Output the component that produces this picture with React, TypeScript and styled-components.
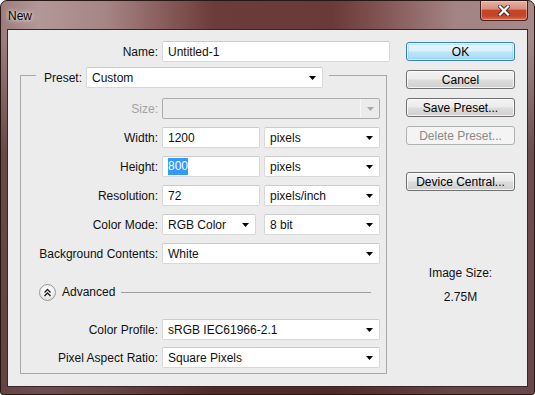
import React from 'react';
import styled, { createGlobalStyle } from 'styled-components';

const GlobalStyle = createGlobalStyle`
  html, body {
    margin: 0;
    padding: 0;
    background: #ffffff;
  }
  body {
    font-family: "Liberation Sans", Arial, sans-serif;
    font-size: 12px;
    color: #101010;
  }
`;

const Window = styled.div`
  box-sizing: border-box;
  width: 535px;
  height: 395px;
  border: 1px solid #2b1616;
  border-radius: 7px 7px 3px 3px;
  background:
    linear-gradient(180deg, rgba(70, 30, 30, 0) 0px, rgba(70, 30, 30, 0) 36px, rgba(62, 28, 28, 0.55) 150px, rgba(62, 28, 28, 0.6) 100%),
    linear-gradient(90deg, #9c7c7c 0%, #b39898 7%, #a58484 20%, #8a5e5e 30%, #6c3b3b 40%, #6a3a3a 62%, #7f5050 70%, #a38383 85%, #a68a8a 100%);
  display: flex;
  flex-direction: column;
  overflow: hidden;
`;

const TitleBar = styled.div`
  height: 28px;
  display: flex;
  align-items: flex-start;
  justify-content: space-between;
`;

const Title = styled.div`
  padding: 8px 0 0 7px;
  font-size: 12px;
  line-height: 14px;
  color: #000;
  text-shadow: 0 0 6px rgba(255, 255, 255, 0.9), 0 0 3px rgba(255, 255, 255, 0.8);
`;

const CloseButton = styled.div`
  box-sizing: border-box;
  width: 48px;
  height: 20px;
  margin-right: 6px;
  border: 1px solid #4a1e1e;
  border-top: none;
  border-radius: 0 0 4px 4px;
  background: linear-gradient(180deg, #e6b2a4 0%, #d98f7c 42%, #c4452a 50%, #c24528 78%, #dc6d4c 100%);
  box-shadow: inset 0 0 0 1px rgba(255, 210, 200, 0.45);
  display: flex;
  align-items: center;
  justify-content: center;
`;

const Client = styled.div`
  flex: 1;
  margin: 0 6px 7px 6px;
  border: 1px solid #3a2424;
  background: #ececec;
  display: flex;
  padding-top: 11px;
`;

const LeftPane = styled.div`
  width: 382px;
  display: flex;
  flex-direction: column;
`;

const RightPane = styled.div`
  width: 109px;
  margin-left: 16px;
  padding-top: 1px;
  display: flex;
  flex-direction: column;
  gap: 9px;
`;

const Row = styled.div<{ $top?: number }>`
  display: flex;
  align-items: center;
  gap: 4px;
  height: 21px;
  margin-top: ${(p) => p.$top ?? 0}px;
`;

const Label = styled.div<{ $width: number; $disabled?: boolean }>`
  width: ${(p) => p.$width}px;
  text-align: right;
  white-space: nowrap;
  color: ${(p) => (p.$disabled ? '#a3a3a3' : '#101010')};
`;

const Field = styled.div<{ $width: number; $offset?: number }>`
  box-sizing: border-box;
  width: ${(p) => p.$width}px;
  height: 21px;
  margin-left: ${(p) => p.$offset ?? 0}px;
  padding-left: 5px;
  border: 1px solid #d8d8d8;
  border-top-color: #cbcbcb;
  border-radius: 2px;
  background: #ffffff;
  display: flex;
  align-items: center;
  white-space: nowrap;
`;

const Selected = styled.span`
  background: #3399ff;
  color: #ffffff;
  padding: 1px 0 2px;
`;

const Select = styled(Field)<{ $disabled?: boolean }>`
  justify-content: space-between;
  padding-right: 6px;
  ${(p) =>
    p.$disabled &&
    `
    background: #ebebeb;
    border-color: #adadad;
    padding-right: 0;
  `}
`;

const ArrowBox = styled.div<{ $disabled?: boolean }>`
  display: flex;
  align-items: center;
  height: 100%;
  ${(p) =>
    p.$disabled &&
    `
    width: 18px;
    justify-content: center;
    border-left: 1px solid #f6f6f6;
  `}
`;

const Group = styled.div`
  margin: 5px 0 0 12px;
  width: 367px;
  display: flex;
  flex-direction: column;
`;

const GroupHead = styled.div`
  display: flex;
  align-items: flex-start;
  height: 21px;
`;

const CornerLeft = styled.div`
  box-sizing: border-box;
  width: 16px;
  height: 13px;
  margin-top: 8px;
  border-top: 1px solid #a8a8a8;
  border-left: 1px solid #a8a8a8;
`;

const CornerRight = styled.div`
  box-sizing: border-box;
  flex: 1;
  height: 13px;
  margin: 8px 0 0 6px;
  border-top: 1px solid #a8a8a8;
  border-right: 1px solid #a8a8a8;
`;

const HeadLabel = styled.div`
  width: 46px;
  margin-right: 4px;
  height: 21px;
  display: flex;
  align-items: center;
  justify-content: flex-end;
`;

const GroupBody = styled.div`
  border: 1px solid #a8a8a8;
  border-top: none;
  padding: 10px 0 5px 0;
  display: flex;
  flex-direction: column;
`;

const AdvancedRow = styled.div`
  display: flex;
  align-items: center;
  height: 18px;
  margin-top: 19px;
  padding: 0 15px 0 18px;
`;

const RoundButton = styled.div`
  box-sizing: border-box;
  width: 17px;
  height: 17px;
  border-radius: 50%;
  border: 1px solid #9a9a9a;
  background: radial-gradient(circle at 50% 30%, #ffffff 0%, #f2f2f2 45%, #d6d6d6 100%);
  display: flex;
  align-items: center;
  justify-content: center;
`;

const AdvancedText = styled.div`
  margin-left: 6px;
`;

const Rule = styled.div`
  flex: 1;
  height: 1px;
  margin-left: 6px;
  background: #9c9c9c;
`;

const Button = styled.div<{ $variant?: 'default' | 'disabled'; $top?: number }>`
  box-sizing: border-box;
  height: 19px;
  margin-top: ${(p) => p.$top ?? 0}px;
  border: 1px solid #707070;
  border-radius: 3px;
  background: linear-gradient(180deg, #f3f3f3 0%, #ebebeb 48%, #dddddd 52%, #cfcfcf 100%);
  box-shadow: inset 0 0 0 1px rgba(255, 255, 255, 0.75);
  display: flex;
  align-items: center;
  justify-content: center;
  color: #000;
  white-space: nowrap;
  ${(p) =>
    p.$variant === 'default' &&
    `
    border-color: #3c7fb1;
    background: linear-gradient(180deg, #eaf6fd 0%, #d9f0fc 48%, #bee6fd 52%, #a7d9f5 100%);
    box-shadow: inset 0 0 0 1px rgba(255, 255, 255, 0.6), inset 0 0 0 2px rgba(110, 200, 240, 0.35);
  `}
  ${(p) =>
    p.$variant === 'disabled' &&
    `
    border-color: #adb2b5;
    background: #f4f4f4;
    box-shadow: none;
    color: #8a8a8a;
  `}
`;

const ImageInfo = styled.div`
  margin-top: 66px;
  text-align: center;
  line-height: 14px;
  display: flex;
  flex-direction: column;
  gap: 10px;
`;

const Arrow = ({ color = '#000' }: { color?: string }) => (
  <svg width="7" height="4" viewBox="0 0 7 4">
    <polygon points="0,0 7,0 3.5,4" fill={color} />
  </svg>
);

const Dropdown = ({
  width,
  value,
  disabled,
  offset,
}: {
  width: number;
  value?: string;
  disabled?: boolean;
  offset?: number;
}) => (
  <Select $width={width} $disabled={disabled} $offset={offset}>
    <span>{value}</span>
    <ArrowBox $disabled={disabled}>
      <Arrow color={disabled ? '#a8a8a8' : '#000'} />
    </ArrowBox>
  </Select>
);

const CloseGlyph = () => (
  <svg width="12" height="11" viewBox="0 0 12 11">
    <path d="M2 1.5 L10 9.5 M10 1.5 L2 9.5" stroke="#3a2a2a" strokeWidth="4" strokeLinecap="square" />
    <path d="M2 1.5 L10 9.5 M10 1.5 L2 9.5" stroke="#ffffff" strokeWidth="2.2" strokeLinecap="square" />
  </svg>
);

const ChevronsUp = () => (
  <svg width="9" height="9" viewBox="0 0 9 9">
    <path d="M1.5 4.5 L4.5 1.5 L7.5 4.5 M1.5 8 L4.5 5 L7.5 8" stroke="#1a1a1a" strokeWidth="1.4" fill="none" />
  </svg>
);

const BODY_LABEL = 137;

const App: React.FC = () => {
  return (
    <>
      <GlobalStyle />
      <Window>
        <TitleBar>
          <Title>New</Title>
          <CloseButton>
            <CloseGlyph />
          </CloseButton>
        </TitleBar>
        <Client>
          <LeftPane>
            <Row>
              <Label $width={150}>Name:</Label>
              <Field $width={228}>Untitled-1</Field>
            </Row>
            <Group>
              <GroupHead>
                <CornerLeft />
                <HeadLabel>Preset:</HeadLabel>
                <Dropdown width={237} value="Custom" />
                <CornerRight />
              </GroupHead>
              <GroupBody>
                <Row>
                  <Label $width={BODY_LABEL} $disabled>Size:</Label>
                  <Dropdown width={218} disabled />
                </Row>
                <Row $top={8}>
                  <Label $width={BODY_LABEL}>Width:</Label>
                  <Field $width={98}>1200</Field>
                  <Dropdown width={116} value="pixels" />
                </Row>
                <Row $top={8}>
                  <Label $width={BODY_LABEL}>Height:</Label>
                  <Field $width={98}>
                    <Selected>800</Selected>
                  </Field>
                  <Dropdown width={116} value="pixels" />
                </Row>
                <Row $top={8}>
                  <Label $width={BODY_LABEL}>Resolution:</Label>
                  <Field $width={98}>72</Field>
                  <Dropdown width={116} value="pixels/inch" />
                </Row>
                <Row $top={8}>
                  <Label $width={BODY_LABEL}>Color Mode:</Label>
                  <Dropdown width={94} value="RGB Color" />
                  <Dropdown width={116} value="8 bit" offset={4} />
                </Row>
                <Row $top={8}>
                  <Label $width={BODY_LABEL}>Background Contents:</Label>
                  <Dropdown width={218} value="White" />
                </Row>
                <AdvancedRow>
                  <RoundButton>
                    <ChevronsUp />
                  </RoundButton>
                  <AdvancedText>Advanced</AdvancedText>
                  <Rule />
                </AdvancedRow>
                <Row $top={18}>
                  <Label $width={BODY_LABEL}>Color Profile:</Label>
                  <Dropdown width={218} value="sRGB IEC61966-2.1" />
                </Row>
                <Row $top={7}>
                  <Label $width={BODY_LABEL}>Pixel Aspect Ratio:</Label>
                  <Dropdown width={218} value="Square Pixels" />
                </Row>
              </GroupBody>
            </Group>
          </LeftPane>
          <RightPane>
            <Button $variant="default">OK</Button>
            <Button>Cancel</Button>
            <Button>Save Preset...</Button>
            <Button $variant="disabled">Delete Preset...</Button>
            <Button $top={18}>Device Central...</Button>
            <ImageInfo>
              <div>Image Size:</div>
              <div>2.75M</div>
            </ImageInfo>
          </RightPane>
        </Client>
      </Window>
    </>
  );
};

export default App;
